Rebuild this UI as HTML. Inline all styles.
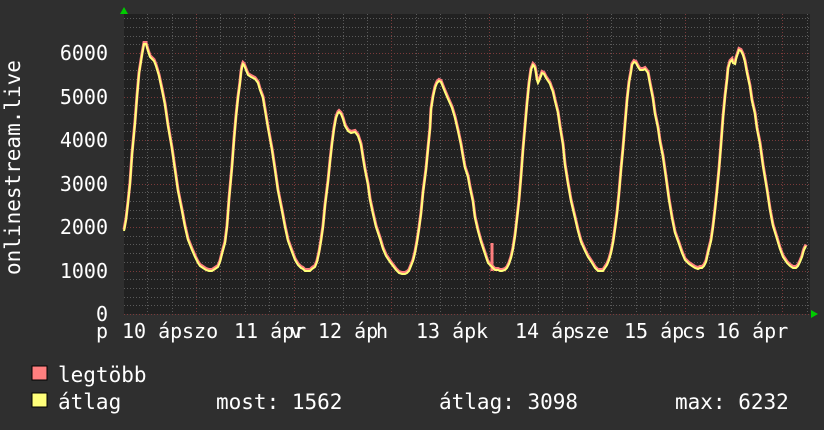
<!DOCTYPE html>
<html><head><meta charset="utf-8"><style>
html,body{margin:0;padding:0;background:#2f2f2f;}
body{width:824px;height:430px;overflow:hidden;position:relative;font-family:"DejaVu Sans Mono","Liberation Mono",monospace;color:#fff;}
svg{position:absolute;left:0;top:0}
</style></head><body>
<svg id="g" width="824" height="430" xmlns="http://www.w3.org/2000/svg">
<rect x="0" y="0" width="824" height="430" fill="#2f2f2f"/>
<rect x="124" y="14" width="686" height="300" fill="#212121"/>
<g id="grid"></g>
<path id="mx" fill="none" stroke="#ff7f7f" stroke-width="3" stroke-linejoin="miter"/>
<path id="av" fill="none" stroke="#ffff7a" stroke-width="2" stroke-linejoin="miter"/>
<polygon points="120,14 128,14 124,7" fill="#00cc00"/>
<polygon points="811,310 811,318 818,314" fill="#00cc00"/>
<g font-family="DejaVu Sans Mono, Liberation Mono, monospace" font-size="20" fill="#fff">
<text x="108" y="60" text-anchor="end">6000</text>
<text x="108" y="104" text-anchor="end">5000</text>
<text x="108" y="147" text-anchor="end">4000</text>
<text x="108" y="191" text-anchor="end">3000</text>
<text x="108" y="234" text-anchor="end">2000</text>
<text x="108" y="278" text-anchor="end">1000</text>
<text x="108" y="321" text-anchor="end">0</text>
<text transform="translate(20,275) rotate(-90)" font-size="21">onlinestream.live</text>
<text x="96" y="338">p</text>
<text x="122" y="338">10 áp</text>
<text x="182" y="338">szo</text>
<text x="234" y="338">11 ápr</text>
<text x="290" y="338">v</text>
<text x="318" y="338">12 áp</text>
<text x="376" y="338">h</text>
<text x="416" y="338">13 áp</text>
<text x="476" y="338">k</text>
<text x="515" y="338">14 áp</text>
<text x="573" y="338">sze</text>
<text x="624" y="338">15 áp</text>
<text x="682" y="338">cs</text>
<text x="716" y="338">16 ápr</text>
</g>
<rect x="32" y="366" width="15" height="14" fill="#ff7f7f" stroke="#000" stroke-width="1"/>
<rect x="32" y="393" width="15" height="14" fill="#ffff7a" stroke="#000" stroke-width="1"/>
<g font-family="DejaVu Sans Mono, Liberation Mono, monospace" font-size="21" fill="#fff">
<text x="58" y="382">legtöbb</text>
<text x="58" y="409">átlag</text>
<text x="216" y="409">most: 1562</text>
<text x="439" y="409">átlag: 3098</text>
<text x="675" y="409">max: 6232</text>
</g>
</svg>
<script>
var ns="http://www.w3.org/2000/svg",g=document.getElementById('grid');
function ln(x1,y1,x2,y2,c){var l=document.createElementNS(ns,'line');l.setAttribute('x1',x1);l.setAttribute('y1',y1);l.setAttribute('x2',x2);l.setAttribute('y2',y2);l.setAttribute('stroke',c);l.setAttribute('stroke-width',1);l.setAttribute('stroke-dasharray','1,2');g.appendChild(l);}
for(var i=0;i<=34;i++){var y=314-i*8.7;if(y<14)break;ln(124,Math.round(y)+.5,810,Math.round(y)+.5,i%5==0?'#7a3a3a':'#5a5a5a');}
for(var k=-8;k<=30;k++){var x=196+k*97.7/4;if(x<124||x>810)continue;ln(Math.round(x)+.5,14,Math.round(x)+.5,314,k%4==0?'#7a3a3a':'#5a5a5a');}
var P=[[124,1900],[130,3000],[137,5000],[144,6200],[150,5900],[156,5700],[165,4800],[175,3300],[185,2000],[195,1300],[203,1050],[212,1000],[220,1200],[227,2000],[234,4000],[240,5300],[243,5750],[248,5500],[258,5300],[265,4700],[275,3300],[285,2000],[295,1250],[303,1030],[310,1000],[317,1200],[323,2000],[330,3500],[336,4500],[341,4600],[348,4200],[358,4100],[365,3300],[373,2300],[383,1500],[393,1100],[402,920],[409,1000],[415,1400],[421,2300],[428,3800],[433,5000],[439,5350],[445,5100],[455,4500],[463,3600],[470,2900],[478,1900],[486,1300],[493,1050],[500,1000],[507,1050],[513,1500],[519,2600],[525,4300],[531,5600],[535,5650],[538,5300],[542,5550],[548,5350],[553,5100],[560,4300],[568,3000],[578,1900],[588,1300],[598,1000],[605,1050],[611,1400],[617,2300],[623,3800],[629,5300],[634,5800],[640,5600],[648,5550],[655,4600],[663,3600],[672,2200],[682,1400],[692,1100],[700,1050],[706,1200],[713,2000],[719,3300],[725,5000],[730,5800],[735,5750],[739,6080],[745,5800],[752,4900],[760,3900],[770,2400],[780,1500],[790,1100],[798,1100],[803,1400],[806,1560]];
function Y(v){return 314-v*0.0435;}
function build(dy){var d='';for(var i=0;i<P.length-1;i++){var p0=P[Math.max(0,i-1)],p1=P[i],p2=P[i+1],p3=P[Math.min(P.length-1,i+2)];for(var t=0;t<1;t+=0.34){var t2=t*t,t3=t2*t;function cr(a,b,c,e){return 0.5*((2*b)+(-a+c)*t+(2*a-5*b+4*c-e)*t2+(-a+3*b-3*c+e)*t3);}var x=cr(p0[0],p1[0],p2[0],p3[0]),v=cr(p0[1],p1[1],p2[1],p3[1]);d+=(d?'L':'M')+Math.round(x)+','+(Math.round(Y(v))+dy);}}var l=P[P.length-1];d+='L'+l[0]+','+(Math.round(Y(l[1]))+dy);return d;}
document.getElementById('mx').setAttribute('d',build(-1.5)+'M492,271L492,243');
document.getElementById('av').setAttribute('d',build(0));
</script>
</body></html>
